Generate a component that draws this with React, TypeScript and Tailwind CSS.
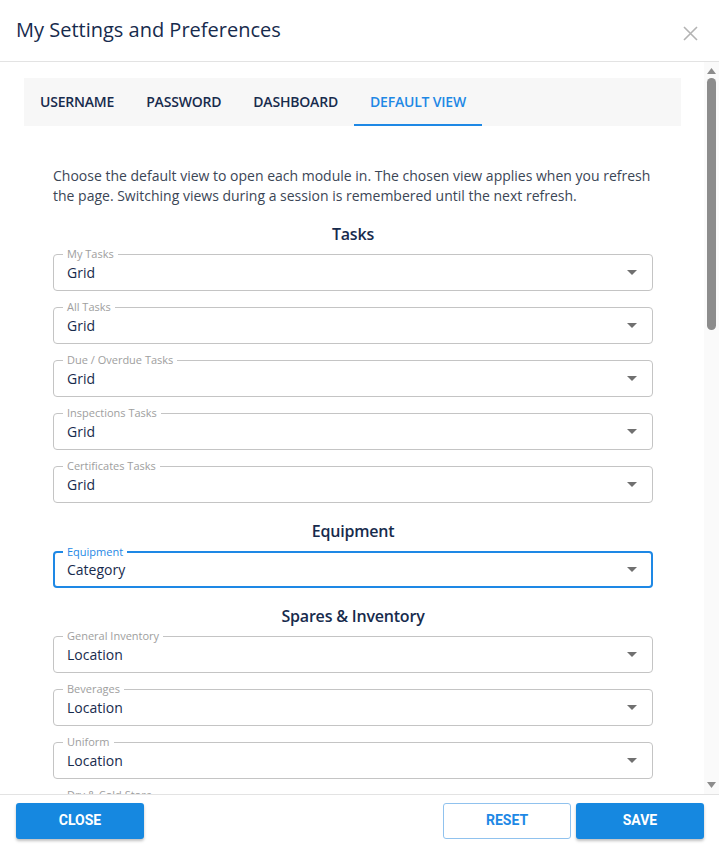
import React from "react";

type Field = { label: string; value: string; focused?: boolean };
type Section = { title: string; fields: Field[] };

const tabs = ["USERNAME", "PASSWORD", "DASHBOARD", "DEFAULT VIEW"];

const sections: Section[] = [
  {
    title: "Tasks",
    fields: [
      { label: "My Tasks", value: "Grid" },
      { label: "All Tasks", value: "Grid" },
      { label: "Due / Overdue Tasks", value: "Grid" },
      { label: "Inspections Tasks", value: "Grid" },
      { label: "Certificates Tasks", value: "Grid" },
    ],
  },
  {
    title: "Equipment",
    fields: [{ label: "Equipment", value: "Category", focused: true }],
  },
  {
    title: "Spares & Inventory",
    fields: [
      { label: "General Inventory", value: "Location" },
      { label: "Beverages", value: "Location" },
      { label: "Uniform", value: "Location" },
      { label: "Dry & Cold Store", value: "Location" },
      { label: "Spare Parts", value: "Location" },
      { label: "Consumables", value: "Location" },
    ],
  },
  {
    title: "Purchasing",
    fields: [
      { label: "Requisitions", value: "Grid" },
      { label: "Purchase Orders", value: "Grid" },
      { label: "Invoices", value: "Grid" },
    ],
  },
  {
    title: "Documents",
    fields: [
      { label: "Documents", value: "Folder" },
      { label: "Certificates", value: "Grid" },
      { label: "Crew Documents", value: "Grid" },
      { label: "Manuals", value: "Folder" },
    ],
  },
];

export default function App() {
  return (
    <div
      className="flex h-[845px] w-[719px] flex-col overflow-hidden bg-white text-[#172b4d]"
      style={{ fontFamily: '"Open Sans", "Noto Sans", sans-serif' }}
    >
      <header className="flex h-[62px] shrink-0 items-center justify-between border-b border-[#e3e3e3] pl-4 pr-[21px]">
        <h1 className="pb-[2px] text-[20px] font-medium text-[#172b4d]">My Settings and Preferences</h1>
        <button type="button" className="mt-[5px] text-[#b3b3b3]">
          <svg width="15" height="15" viewBox="0 0 15 15" fill="none" stroke="currentColor" strokeWidth="1.6">
            <path d="M1 1l13 13M14 1L1 14" />
          </svg>
        </button>
      </header>

      <div className="flex min-h-0 flex-1">
        <div className="min-w-0 flex-1 overflow-hidden pl-6 pr-[23px] pt-4">
          <nav className="flex h-12 bg-[#f7f7f7]">
            {tabs.map((tab, i) => (
              <button
                key={tab}
                type="button"
                className={[
                  "border-b-2 px-4 text-[14px] font-semibold tracking-[-0.2px]",
                  i === 3 ? "border-[#1e88e5] text-[#1e88e5]" : "border-transparent text-[#172b4d]",
                ].join(" ")}
              >
                {tab}
              </button>
            ))}
          </nav>

          <div className="pb-6 pl-[29px] pr-[28px] pt-[40px]">
            <p className="text-[14px] leading-5 text-[#3b4656]">
              Choose the default view to open each module in. The chosen view applies when you refresh the page.
              Switching views during a session is remembered until the next refresh.
            </p>

            {sections.map((section) => (
              <section key={section.title}>
                <h2 className="mb-2 mt-4 text-center text-[16px] font-semibold leading-6 tracking-[-0.2px] text-[#172b4d]">
                  {section.title}
                </h2>
                <div className="flex flex-col gap-4">
                  {section.fields.map((field) => (
                    <SelectField key={field.label} field={field} />
                  ))}
                </div>
              </section>
            ))}
          </div>
        </div>

        {/* scrollbar */}
        <div className="flex w-[15px] shrink-0 flex-col items-center bg-[#fafafa] pt-[6px]">
          <svg width="9" height="6" viewBox="0 0 9 6" className="text-[#8c8c8c]">
            <path d="M0 6h9L4.5 0z" fill="currentColor" />
          </svg>
          <div className="mt-[4px] h-[252px] w-[9px] rounded-full bg-[#8c8c8c]" />
          <div className="flex-1" />
          <svg width="9" height="6" viewBox="0 0 9 6" className="mb-[6px] text-[#8c8c8c]">
            <path d="M0 0h9L4.5 6z" fill="currentColor" />
          </svg>
        </div>
      </div>

      <footer className="flex h-[51px] shrink-0 items-center justify-between border-t border-[#e3e3e3] pl-4 pr-[15px] pt-[1px]">
        <ActionButton>CLOSE</ActionButton>
        <div className="flex gap-[5px]">
          <ActionButton outline>RESET</ActionButton>
          <ActionButton>SAVE</ActionButton>
        </div>
      </footer>
    </div>
  );
}

function SelectField({ field }: { field: Field }) {
  return (
    <div
      className={[
        "relative flex h-[37px] shrink-0 items-center rounded-[4px]",
        field.focused ? "border-2 border-[#1e88e5] pl-[12px] pr-[14px]" : "border border-[#c4c4c4] pl-[13px] pr-[15px]",
      ].join(" ")}
    >
      <span
        className={[
          "absolute top-[-8px] whitespace-nowrap bg-white px-1 text-[11px] leading-[14px]",
          field.focused ? "left-[8px] text-[#1e88e5]" : "left-[9px] text-[#9e9e9e]",
        ].join(" ")}
      >
        {field.label}
      </span>
      <span className="flex-1 pb-[1px] text-[14px] text-[#172b4d]">{field.value}</span>
      <svg width="10" height="5" viewBox="0 0 10 5" className="text-[#707070]">
        <path d="M0 0h10L5 5z" fill="currentColor" />
      </svg>
    </div>
  );
}

function ActionButton({ children, outline = false }: { children: React.ReactNode; outline?: boolean }) {
  return (
    <button
      type="button"
      className={[
        "h-[36px] w-[128px] rounded-[3px] text-[14px] font-bold",
        outline
          ? "border border-[#90c2ee] bg-white text-[#1e88e5]"
          : "bg-[#1688e0] text-white shadow-[0_2px_3px_rgba(0,0,0,0.25)]",
      ].join(" ")}
      style={{ fontFamily: 'Roboto, "Liberation Sans", sans-serif' }}
    >
      {children}
    </button>
  );
}
